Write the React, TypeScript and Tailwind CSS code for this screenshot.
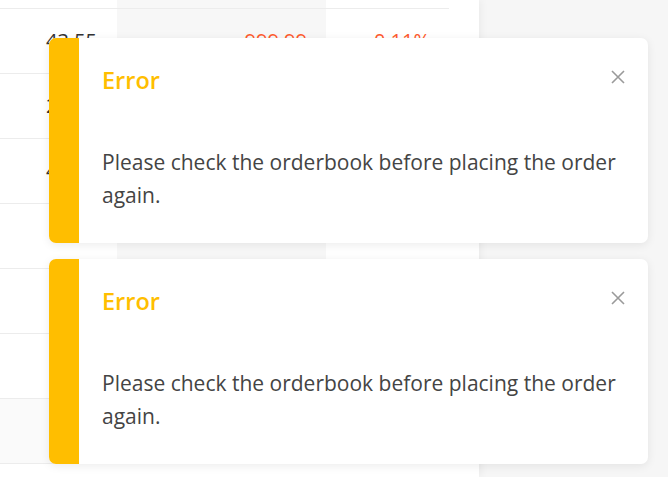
import React from "react";

const rows = [
  { price: "43.55", amount: "999.99", change: "-0.11%" },
  { price: "24.10", amount: "", change: "" },
  { price: "41.27", amount: "", change: "" },
  { price: "", amount: "", change: "" },
  { price: "", amount: "", change: "" },
  { price: "", amount: "", change: "" },
  { price: "", amount: "", change: "" },
];

function Toast() {
  return (
    <div className="relative flex h-[205px] overflow-hidden rounded-[7px] bg-white shadow-[0_2px_10px_rgba(0,0,0,0.08)]">
      <div className="w-[30px] shrink-0 bg-[#ffbe00]" />
      <div className="flex-1 pl-[23px] pr-[30px] pt-[26px]">
        <div className="text-[23.5px] leading-[32px] font-semibold text-[#ffbe00]">Error</div>
        <p className="mt-[50px] text-[21px] leading-[33px] text-[#444]">
          Please check the orderbook before placing the order again.
        </p>
      </div>
      <button className="absolute right-[23px] top-[32px] flex h-[14px] w-[14px] items-center justify-center text-[#9a9a9a]">
        <svg viewBox="0 0 14 14" className="h-[14px] w-[14px]" fill="none" stroke="currentColor" strokeWidth="1.6">
          <path d="M1 1L13 13M13 1L1 13" />
        </svg>
      </button>
    </div>
  );
}

export default function App() {
  return (
    <div
      className="relative h-[477px] w-[668px] overflow-hidden bg-[#f6f6f6]"
      style={{ fontFamily: '"Open Sans", "Liberation Sans", sans-serif' }}
    >
      <div className="h-full w-[479px] bg-white shadow-[2px_0_8px_rgba(0,0,0,0.05)]">
        <div className="w-[449px]">
          {/* top row cut off */}
          <div className="flex h-[8px]">
            <div className="w-[117px]" />
            <div className="w-[209px] bg-[#f7f7f7]" />
          </div>
          {rows.map((r, i) => (
            <div
              key={i}
              className={`flex h-[65px] border-t border-[#ececec] text-[20px] ${i === 6 ? "bg-[#fafafa]" : ""}`}
            >
              <div className="flex w-[117px] items-center justify-end pr-[20px] text-[#333]">{r.price}</div>
              <div className={`flex w-[209px] items-center justify-end pr-[19px] text-[#ff5b2e] ${i === 6 ? "" : "bg-[#f7f7f7]"}`}>
                {r.amount}
              </div>
              <div className="flex flex-1 items-center justify-end pr-[19px] text-[#ff5b2e]">{r.change}</div>
            </div>
          ))}
          <div className="h-[15px] border-t border-[#ececec]" />
        </div>
      </div>

      <div className="absolute left-[49px] top-[38px] flex w-[599px] flex-col gap-[16px]">
        <Toast />
        <Toast />
      </div>
    </div>
  );
}
